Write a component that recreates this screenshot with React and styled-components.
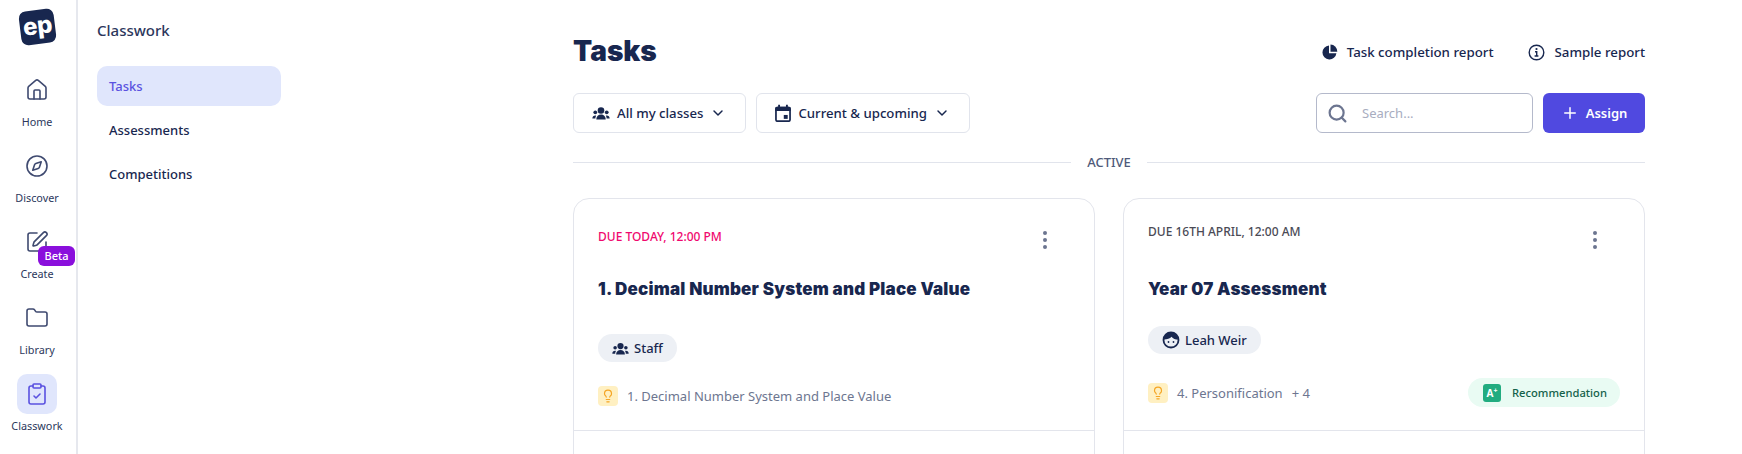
import React from 'react'
import styled, { createGlobalStyle } from 'styled-components'
import { Home, Compass, SquarePen, Folder, ClipboardCheck, Lightbulb, Search, Plus, ChevronDown } from 'lucide-react'

const GlobalStyle = createGlobalStyle`
 html, body {
  margin: 0;
  padding: 0;
  height: 454px;
  overflow: hidden;
  background: #fff;
  font-family: "Noto Sans", "Liberation Sans", sans-serif;
  color: #18274f;
 }
 * { box-sizing: border-box; }
`

const Page = styled.div`
 display: flex;
 width: 1742px;
 height: 454px;
 overflow: hidden;
`

const Rail = styled.nav`
 width: 78px;
 flex: none;
 border-right: 2px solid #e6e8ee;
 display: flex;
 flex-direction: column;
 align-items: center;
 padding: 10px 2px 0 0;
`

const Logo = styled.div`
 width: 35px;
 height: 34px;
 margin: 0 0 26px;
 border-radius: 7px;
 background: #18274f;
 color: #fff;
 transform: rotate(-7deg);
 display: flex;
 align-items: center;
 justify-content: center;
 font-family: "Inter", sans-serif;
 font-weight: 800;
 font-size: 24px;
 letter-spacing: -0.5px;
 line-height: 1;
 padding-bottom: 3px;
`

const RailItem = styled.a`
 position: relative;
 width: 74px;
 height: 76px;
 flex: none;
 display: flex;
 flex-direction: column;
 align-items: center;
 color: #2c375c;
 font-size: 10.8px;
 line-height: 14px;
 gap: 5px;
`

const RailIcon = styled.span`
 width: 40px;
 height: 40px;
 border-radius: 10px;
 display: flex;
 align-items: center;
 justify-content: center;
 background: ${p => (p.$active ? '#e0e6fc' : 'transparent')};
 color: ${p => (p.$active ? '#5a52e0' : '#3f4a70')};
`

const BetaBadge = styled.span`
 position: absolute;
 top: 24px;
 left: 38px;
 width: 37px;
 height: 20px;
 border-radius: 6px;
 background: #8a0fdc;
 color: #fff;
 font-size: 11px;
 font-weight: 500;
 line-height: 20px;
 text-align: center;
`

const SubNav = styled.aside`
 width: 204px;
 flex: none;
 padding: 18px 0 0 19px;
`

const SubNavTitle = styled.h2`
 margin: 0 0 24px;
 font-size: 15px;
 line-height: 24px;
 font-weight: 500;
 color: #2c375c;
`

const SubNavList = styled.div`
 display: flex;
 flex-direction: column;
 gap: 4px;
 width: 184px;
`

const SubNavItem = styled.a`
 height: 40px;
 display: flex;
 align-items: center;
 padding-left: 12px;
 border-radius: 10px;
 font-size: 13px;
 font-weight: 500;
 color: ${p => (p.$active ? '#5a52e0' : '#18274f')};
 background: ${p => (p.$active ? '#e0e6fc' : 'transparent')};
`

const Main = styled.main`
 width: 1072px;
 flex: none;
 margin-left: 291px;
 padding-top: 30px;
 display: flex;
 flex-direction: column;
`

const Header = styled.header`
 height: 42px;
 display: flex;
 align-items: center;
 justify-content: space-between;
`

const Title = styled.h1`
 margin: 0;
 font-family: "Inter", sans-serif;
 font-weight: 900;
 font-size: 28px;
 line-height: 42px;
 color: #18274f;
`

const ReportLinks = styled.div`
 display: flex;
 gap: 35px;
 padding-top: 2px;
`

const ReportLink = styled.a`
 display: flex;
 align-items: center;
 gap: 9px;
 font-size: 13.3px;
 font-weight: 500;
 color: #18274f;
`

const Toolbar = styled.div`
 height: 40px;
 margin-top: 21px;
 display: flex;
 align-items: center;
 gap: 10px;
`

const FilterButton = styled.button`
 height: 40px;
 display: flex;
 align-items: center;
 gap: 7px;
 padding: 0 19px 0 18px;
 background: #fff;
 border: 1px solid #e1e4ec;
 border-radius: 6px;
 font: inherit;
 font-size: 13.2px;
 font-weight: 500;
 color: #18274f;
`

const Spacer = styled.div`
 flex: 1;
`

const SearchBox = styled.label`
 width: 217px;
 height: 40px;
 display: flex;
 align-items: center;
 gap: 12px;
 padding-left: 10px;
 border: 1px solid #b4b9cb;
 border-radius: 6px;
 color: #6c7590;
`

const SearchInput = styled.input`
 border: 0;
 outline: 0;
 width: 140px;
 font: inherit;
 font-size: 13px;
 &::placeholder {
  color: #a8adbf;
 }
`

const AssignButton = styled.button`
 width: 102px;
 height: 40px;
 display: flex;
 align-items: center;
 justify-content: center;
 gap: 7px;
 border: 0;
 border-radius: 6px;
 background: #5049e0;
 color: #fff;
 font: inherit;
 font-size: 13px;
 font-weight: 600;
`

const SectionDivider = styled.div`
 height: 20px;
 margin-top: 20px;
 display: flex;
 align-items: center;
 gap: 16px;
 font-size: 13px;
 font-weight: 500;
 color: #4f5a7a;
 &::before, &::after {
  content: '';
  flex: 1;
  height: 1px;
  background: #e1e4ec;
 }
`

const CardGrid = styled.div`
 margin-top: 27px;
 display: grid;
 grid-template-columns: 522px 522px;
 justify-content: space-between;
`

const Card = styled.article`
 height: 300px;
 border: 1px solid #e3e5ec;
 border-radius: 16px;
`

const CardTop = styled.div`
 position: relative;
 height: 232px;
 padding: 0 24px;
 border-bottom: 1px solid #e3e5ec;
 display: flex;
 flex-direction: column;
`

const DueDate = styled.div`
 height: 16px;
 margin-top: ${p => (p.$urgent ? '30px' : '25px')};
 font-size: 12px;
 line-height: 16px;
 font-weight: 500;
 color: ${p => (p.$urgent ? '#f0086e' : '#4a4a55')};
`

const MenuDots = styled.span`
 position: absolute;
 top: 32px;
 right: 47px;
 display: flex;
 flex-direction: column;
 gap: 3px;
 & > i {
  width: 4px;
  height: 4px;
  border-radius: 50%;
  background: #6c7590;
 }
`

const CardTitle = styled.h3`
 margin: ${p => (p.$urgent ? '32px' : '37px')} 0 0;
 font-family: "Inter", sans-serif;
 font-weight: 900;
 font-size: 17px;
 letter-spacing: 0.2px;
 line-height: 24px;
 color: #18274f;
`

const Chip = styled.span`
 align-self: flex-start;
 height: 28px;
 margin-top: ${p => (p.$urgent ? '33px' : '25px')};
 padding: 0 14px;
 display: flex;
 align-items: center;
 gap: 5px;
 border-radius: 14px;
 background: #edf0f5;
 font-size: 13px;
 font-weight: 500;
 color: #18274f;
`

const MetaRow = styled.div`
 margin-top: 24px;
 height: ${p => (p.$urgent ? '20px' : '29px')};
 display: flex;
 align-items: center;
 justify-content: space-between;
`

const Skill = styled.div`
 display: flex;
 align-items: center;
 gap: 9px;
 font-size: 13px;
 color: #6d7690;
`

const BulbBox = styled.span`
 width: 20px;
 height: 20px;
 border-radius: 4px;
 background: #fff0c2;
 color: #f5a524;
 display: flex;
 align-items: center;
 justify-content: center;
`

const RecommendationPill = styled.span`
 width: 152px;
 height: 29px;
 border-radius: 15px;
 background: #e9fbf3;
 display: flex;
 align-items: center;
 gap: 11px;
 padding-left: 15px;
 font-size: 11.2px;
 font-weight: 500;
 color: #14614a;
`

const GradeIcon = styled.span`
 width: 18px;
 height: 18px;
 border-radius: 3px;
 background: #22ac80;
 color: #fff;
 display: flex;
 align-items: center;
 justify-content: center;
 font-size: 10px;
 font-weight: 700;
 line-height: 1;
 & > sup {
  font-size: 7px;
  line-height: 0;
  margin-top: -3px;
 }
`

const UsersIcon = ({ size = 18 }) => (
 <svg width={size} height={size} viewBox="0 0 24 24" fill="currentColor">
  <circle cx="12" cy="8.600" r="4.400" />
  <circle cx="4.400" cy="11" r="2.500" />
  <circle cx="19.600" cy="11" r="2.500" />
  <path d="M5.800 20c0-3.400 2.800-6 6.200-6s6.200 2.600 6.200 6v.6H5.800z" />
  <path d="M.5 19c0-2.200 1.500-3.800 3.800-3.800.5 0 1 .1 1.300.3-.8 1-1.100 2.200-1.100 3.900H.5z" />
  <path d="M23.500 19c0-2.200-1.500-3.800-3.800-3.800-.5 0-1 .1-1.300.3.8 1 1.100 2.200 1.100 3.900h4z" />
 </svg>
)

const CalendarIcon = () => (
 <svg width="16" height="18" viewBox="2 0 20 23" fill="none">
  <path d="M4 3.500h16a2 2 0 0 1 2 2V9H2V5.500a2 2 0 0 1 2-2z" fill="currentColor" />
  <path d="M7 1v4M17 1v4" stroke="currentColor" strokeWidth="2.400" />
  <rect x="3" y="4.500" width="18" height="17.500" rx="2" stroke="currentColor" strokeWidth="2.200" />
  <rect x="13" y="14" width="5" height="5" fill="currentColor" />
 </svg>
)

const PieIcon = () => (
 <svg width="16" height="16" viewBox="0 0 16 16" fill="currentColor">
  <path d="M7 1.500v7.800h7.400A7 7 0 1 1 7 1.500z" />
  <path d="M8.500 .5A7 7 0 0 1 15.300 7.800H8.500z" />
 </svg>
)

const InfoIcon = () => (
 <svg width="17" height="17" viewBox="0 0 17 17" fill="none" stroke="currentColor">
  <circle cx="8.500" cy="8.500" r="7.300" strokeWidth="1.400" />
  <circle cx="8.500" cy="5" r="1.100" fill="currentColor" stroke="none" />
  <path d="M7 7.800h1.700v4M6.600 12h3.800" strokeWidth="1.400" />
 </svg>
)

const FaceIcon = () => (
 <svg width="18" height="18" viewBox="0 0 18 18">
  <circle cx="9" cy="9" r="7.500" fill="none" stroke="currentColor" strokeWidth="1.800" />
  <path d="M2 8.500C2 4.500 5 1.500 9 1.500s7 3 7 7c-2.500 0-5-.8-6.500-2.800C8 7.500 5 8.500 2 8.500z" fill="currentColor" />
  <circle cx="6.500" cy="11" r=".9" fill="currentColor" />
  <circle cx="11.500" cy="11" r=".9" fill="currentColor" />
 </svg>
)

const railItems = [
 { label: 'Home', Icon: Home },
 { label: 'Discover', Icon: Compass },
 { label: 'Create', Icon: SquarePen, beta: true },
 { label: 'Library', Icon: Folder },
 { label: 'Classwork', Icon: ClipboardCheck, active: true },
]

const App = () => {
 return (
  <Page>
   <GlobalStyle />
   <Rail>
    <Logo>ep</Logo>
    {railItems.map(({ label, Icon, beta, active }) => (
     <RailItem key={label}>
      <RailIcon $active={active}>
       <Icon size={24} strokeWidth={1.6} />
      </RailIcon>
      {beta && <BetaBadge>Beta</BetaBadge>}
      {label}
     </RailItem>
    ))}
   </Rail>
   <SubNav>
    <SubNavTitle>Classwork</SubNavTitle>
    <SubNavList>
     <SubNavItem $active>Tasks</SubNavItem>
     <SubNavItem>Assessments</SubNavItem>
     <SubNavItem>Competitions</SubNavItem>
    </SubNavList>
   </SubNav>
   <Main>
    <Header>
     <Title>Tasks</Title>
     <ReportLinks>
      <ReportLink><PieIcon />Task completion report</ReportLink>
      <ReportLink><InfoIcon />Sample report</ReportLink>
     </ReportLinks>
    </Header>
    <Toolbar>
     <FilterButton><UsersIcon />All my classes<ChevronDown size={16} strokeWidth={2.2} /></FilterButton>
     <FilterButton><CalendarIcon />Current &amp; upcoming<ChevronDown size={16} strokeWidth={2.2} /></FilterButton>
     <Spacer />
     <SearchBox>
      <Search size={21} strokeWidth={2.5} />
      <SearchInput placeholder="Search..." />
     </SearchBox>
     <AssignButton><Plus size={18} strokeWidth={2} />Assign</AssignButton>
    </Toolbar>
    <SectionDivider>ACTIVE</SectionDivider>
    <CardGrid>
     <Card>
      <CardTop>
       <DueDate $urgent>DUE TODAY, 12:00 PM</DueDate>
       <MenuDots><i /><i /><i /></MenuDots>
       <CardTitle $urgent>1. Decimal Number System and Place Value</CardTitle>
       <Chip $urgent><UsersIcon size={17} />Staff</Chip>
       <MetaRow $urgent>
        <Skill>
         <BulbBox><Lightbulb size={14} strokeWidth={2} /></BulbBox>
         1. Decimal Number System and Place Value
        </Skill>
       </MetaRow>
      </CardTop>
     </Card>
     <Card>
      <CardTop>
       <DueDate>DUE 16TH APRIL, 12:00 AM</DueDate>
       <MenuDots><i /><i /><i /></MenuDots>
       <CardTitle>Year 07 Assessment</CardTitle>
       <Chip><FaceIcon />Leah Weir</Chip>
       <MetaRow>
        <Skill>
         <BulbBox><Lightbulb size={14} strokeWidth={2} /></BulbBox>
         4. Personification
         <span>+ 4</span>
        </Skill>
        <RecommendationPill>
         <GradeIcon>A<sup>+</sup></GradeIcon>
         Recommendation
        </RecommendationPill>
       </MetaRow>
      </CardTop>
     </Card>
    </CardGrid>
   </Main>
  </Page>
 )
}

export default App
